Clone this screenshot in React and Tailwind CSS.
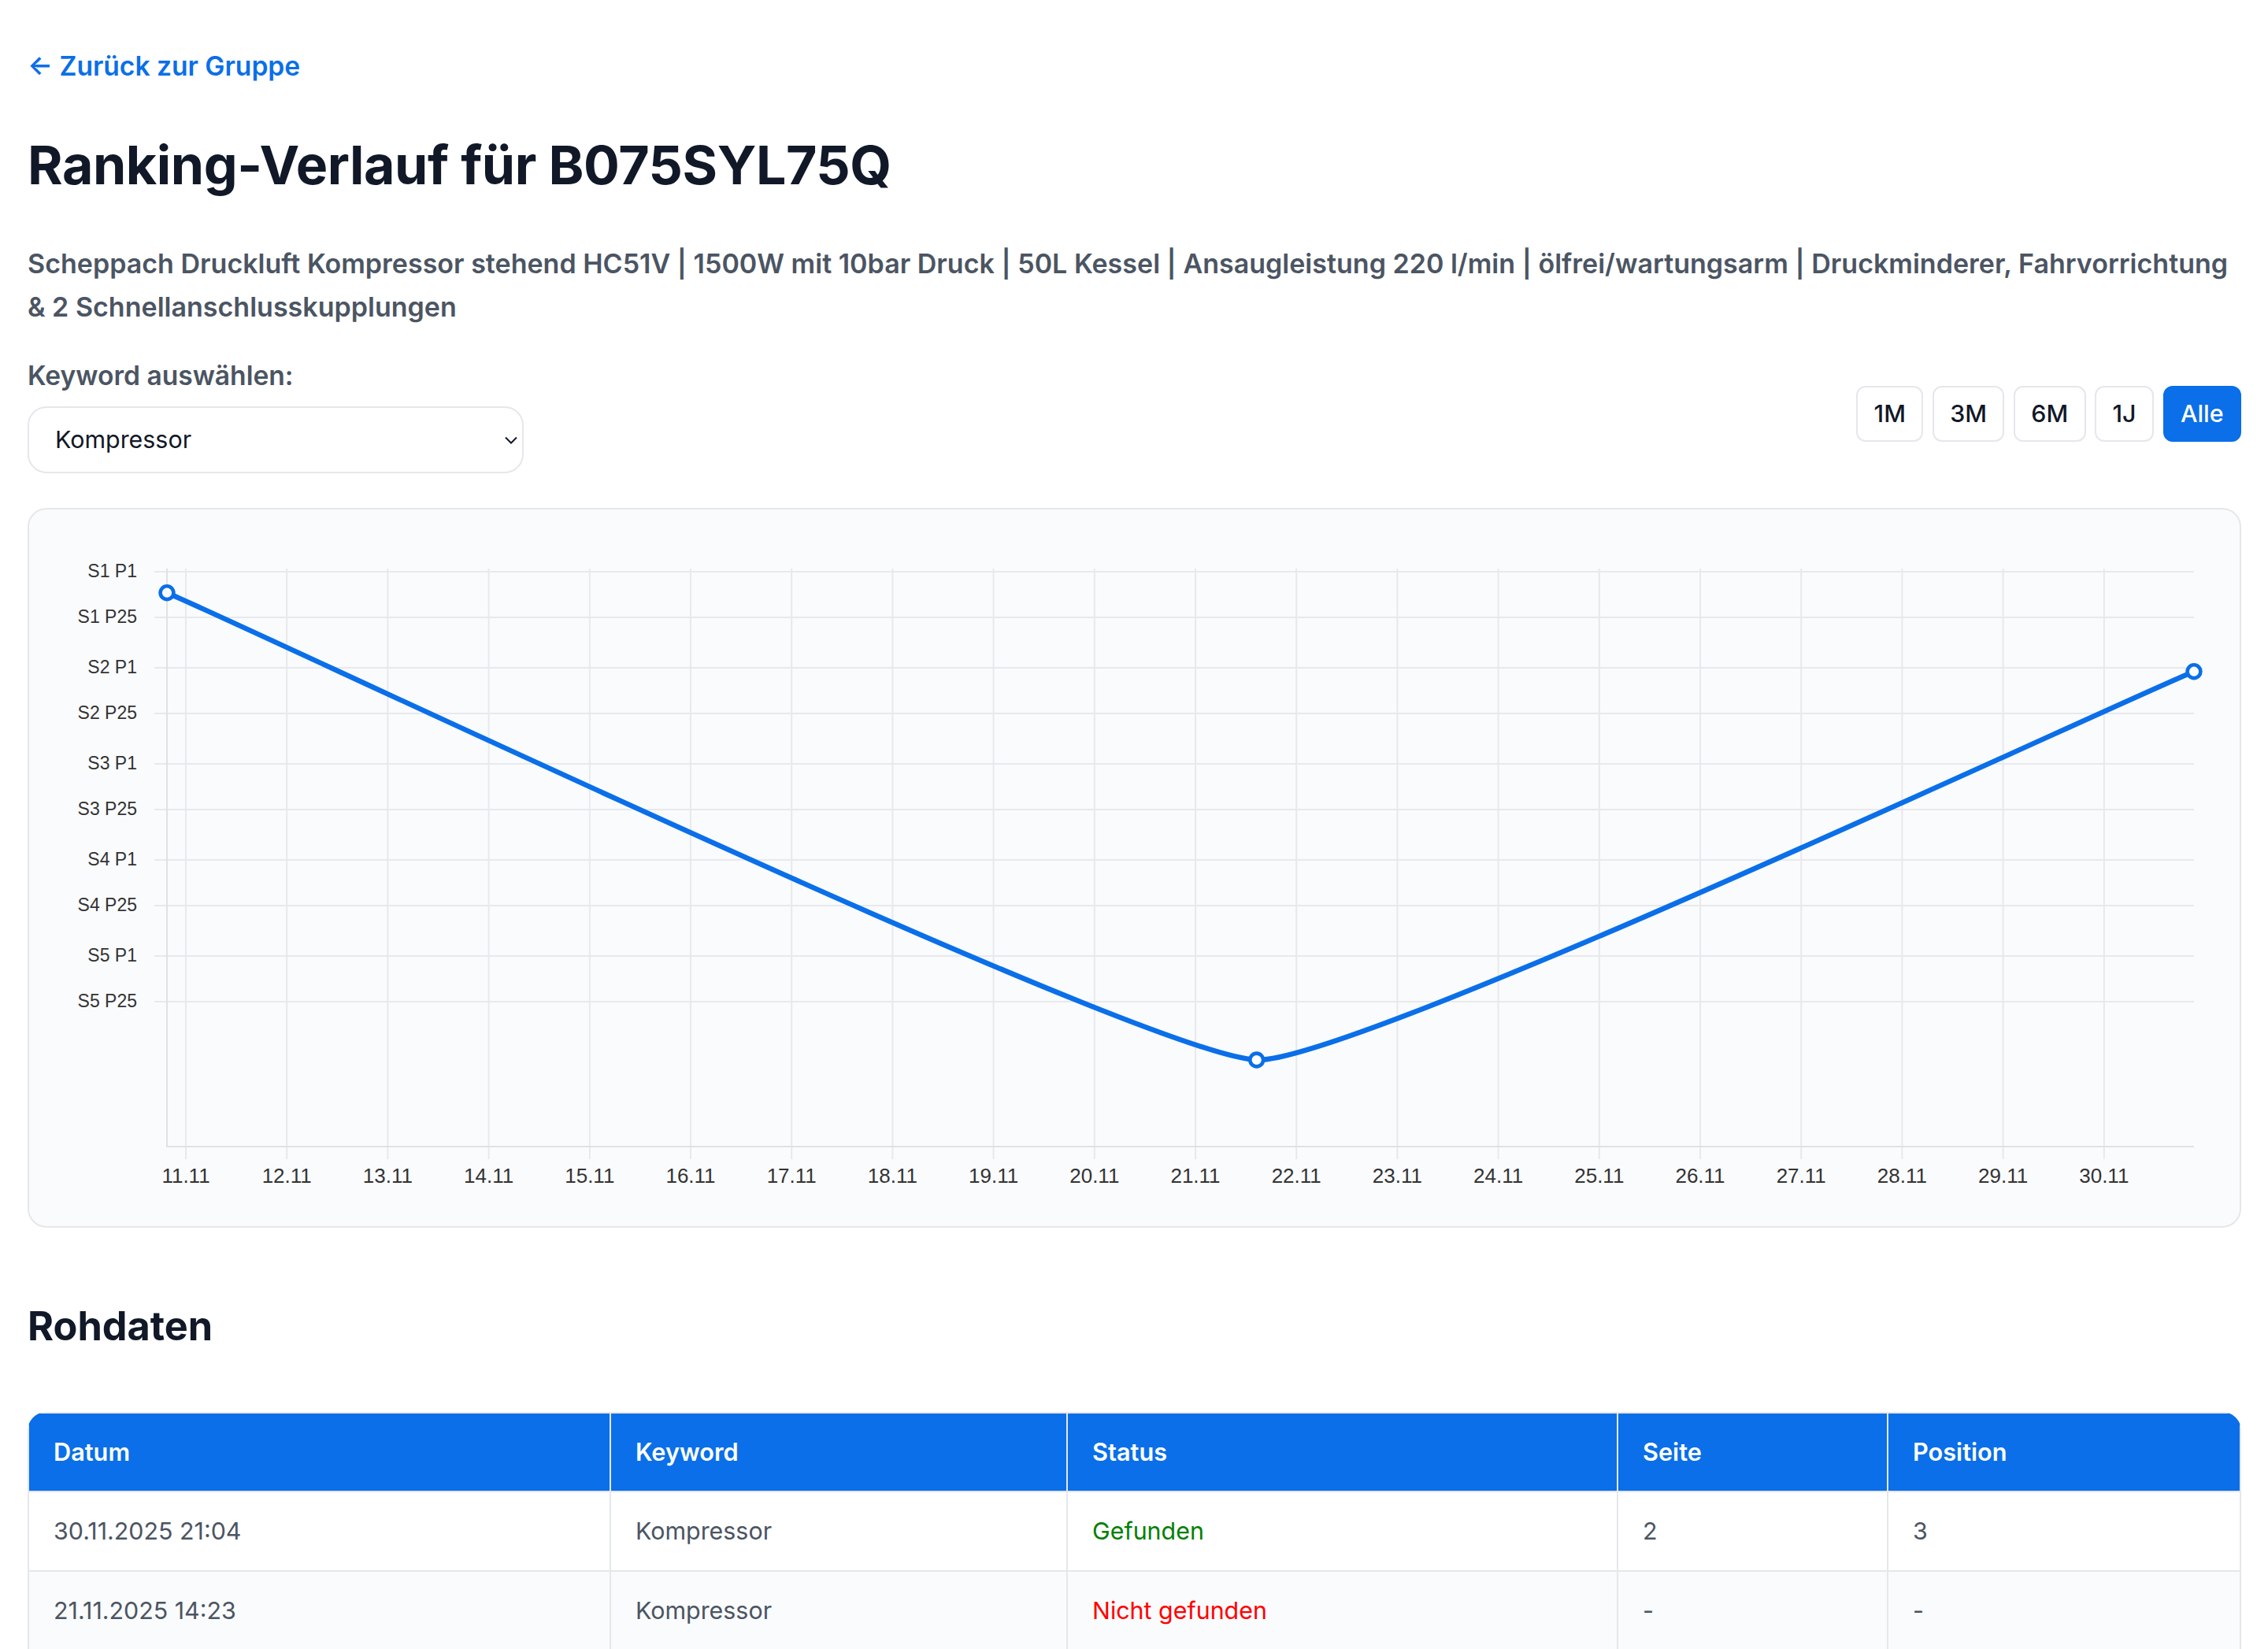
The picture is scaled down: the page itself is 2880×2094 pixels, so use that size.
import React from 'react';

const ranges = ['1M', '3M', '6M', '1J', 'Alle'];

const yTicks = [
  ['S1 P1', 726], ['S1 P25', 784], ['S2 P1', 848], ['S2 P25', 906], ['S3 P1', 970],
  ['S3 P25', 1028], ['S4 P1', 1092], ['S4 P25', 1150], ['S5 P1', 1214], ['S5 P25', 1272],
];

const xTicks = Array.from({ length: 20 }, (_, i) => ({ label: `${11 + i}.11`, x: 236 + i * 128.2 }));

const points = [[212, 752.7], [1595.7, 1346], [2786, 852.7]];

const rows = [
  { date: '30.11.2025 21:04', status: 'Gefunden', ok: true, page: '2', pos: '3' },
  { date: '21.11.2025 14:23', status: 'Nicht gefunden', ok: false, page: '-', pos: '-' },
];

function RankingChart() {
  return (
    <svg viewBox="37 647 2807 910" className="block w-full h-[910px]">
      {yTicks.map(([label, y]) => (
        <g key={label}>
          <line x1="196" x2="2786" y1={y} y2={y} stroke="#e8e9ec" strokeWidth="2" />
          <text x="174" y={y + 7} textAnchor="end" fontSize="23" fill="#333333" className="font-['Liberation_Sans']">{label}</text>
        </g>
      ))}
      {xTicks.map(t => (
        <g key={t.label}>
          <line x1={t.x} x2={t.x} y1="722" y2="1472" stroke="#e8e9ec" strokeWidth="2" />
          <text x={t.x} y="1502" textAnchor="middle" fontSize="26" fill="#333333" className="font-['Liberation_Sans']">{t.label}</text>
        </g>
      ))}
      <line x1="212" x2="212" y1="722" y2="1457" stroke="#dfe1e5" strokeWidth="2" />
      <line x1="211" x2="2786" y1="1456" y2="1456" stroke="#dfe1e5" strokeWidth="2" />
      <path
        d="M212 752.7 C350.4 812 1457 1340.6 1595.7 1346 C1714.4 1350.6 2667 902 2786 852.7"
        fill="none"
        stroke="#0a6fe8"
        strokeWidth="6.5"
      />
      {points.map(([cx, cy]) => (
        <circle key={cx} cx={cx} cy={cy} r="8.4" fill="#ffffff" stroke="#0a6fe8" strokeWidth="4.6" />
      ))}
    </svg>
  );
}

export default function App() {
  return (
    <div className="h-[2094px] overflow-hidden bg-white pl-[35px] pr-[34px] pt-[62px] font-[Inter,sans-serif]">
      <a href="#" className="block text-[33.6px] leading-[44px] font-semibold text-[#0a6fe8]">← Zurück zur Gruppe</a>
      <h1 className="mt-[63px] text-[68px] leading-[80px] font-bold tracking-[-0.45px] text-[#111827]">Ranking-Verlauf für B075SYL75Q</h1>
      <p className="mt-[58px] text-[34.04px] leading-[55px] font-semibold text-[#4b5563]">
        Scheppach Druckluft Kompressor stehend HC51V | 1500W mit 10bar Druck | 50L Kessel | Ansaugleistung 220 l/min | ölfrei/wartungsarm | Druckminderer, Fahrvorrichtung &amp; 2 Schnellanschlusskupplungen
      </p>

      <div className="mt-[38px] flex items-center justify-between">
        <div>
          <label className="block text-[33.6px] leading-[44px] font-semibold text-[#4b5563]">Keyword auswählen:</label>
          <div className="relative mt-[17px] w-[630px]">
            <select className="block w-full h-[85px] appearance-none rounded-[24px] border-2 border-[#e5e7eb] bg-white pl-[33px] pr-[40px] text-[30.4px] text-[#111827]">
              <option>Kompressor</option>
            </select>
            <svg viewBox="0 0 16 10" className="absolute right-[8px] top-[38px] h-[10px] w-[16px]" fill="none" stroke="#111827" strokeWidth="2">
              <path d="M1 1.5 L8 8.5 L15 1.5" />
            </svg>
          </div>
        </div>
        <div className="flex gap-[11.5px] mb-[5px]">
          {ranges.map(r => (
            <button
              key={r}
              className={r === 'Alle'
                ? 'h-[71px] px-[20.4px] rounded-[12px] border-2 border-[#0a6fe8] bg-[#0a6fe8] text-[30.4px] font-medium text-white'
                : 'h-[71px] px-[20.4px] rounded-[12px] border-2 border-[#e5e7eb] bg-white text-[30.4px] font-medium text-[#111827]'}
            >
              {r}
            </button>
          ))}
        </div>
      </div>

      <div className="mt-[44px] rounded-[24px] border-2 border-[#e5e7eb] bg-[#fafbfd]">
        <RankingChart />
      </div>

      <h2 className="mt-[95px] text-[50.4px] leading-[60px] font-bold text-[#111827]">Rohdaten</h2>

      <div className="mt-[79px] overflow-hidden rounded-t-[24px]">
        <table className="w-full table-fixed border-collapse text-left text-[30.4px]">
          <colgroup>
            <col className="w-[739px]" />
            <col className="w-[580px]" />
            <col className="w-[699px]" />
            <col className="w-[343px]" />
            <col />
          </colgroup>
          <thead>
            <tr className="h-[100px] bg-[#0a6fe8] text-white">
              {['Datum', 'Keyword', 'Status', 'Seite', 'Position'].map(h => (
                <th key={h} className="border-2 border-[#e5e7eb] px-[31px] text-[30.7px] font-semibold">{h}</th>
              ))}
            </tr>
          </thead>
          <tbody className="text-[#4b5563]">
            {rows.map((row, i) => (
              <tr key={row.date} className={i % 2 === 0 ? 'h-[101px] bg-white' : 'h-[101px] bg-[#fafbfc]'}>
                <td className="border-2 border-[#e5e7eb] px-[31px]">{row.date}</td>
                <td className="border-2 border-[#e5e7eb] px-[31px]">Kompressor</td>
                <td className={row.ok ? 'border-2 border-[#e5e7eb] px-[31px] text-[#008000]' : 'border-2 border-[#e5e7eb] px-[31px] text-[#ff0000]'}>{row.status}</td>
                <td className="border-2 border-[#e5e7eb] px-[31px]">{row.page}</td>
                <td className="border-2 border-[#e5e7eb] px-[31px]">{row.pos}</td>
              </tr>
            ))}
          </tbody>
        </table>
      </div>
    </div>
  );
}
